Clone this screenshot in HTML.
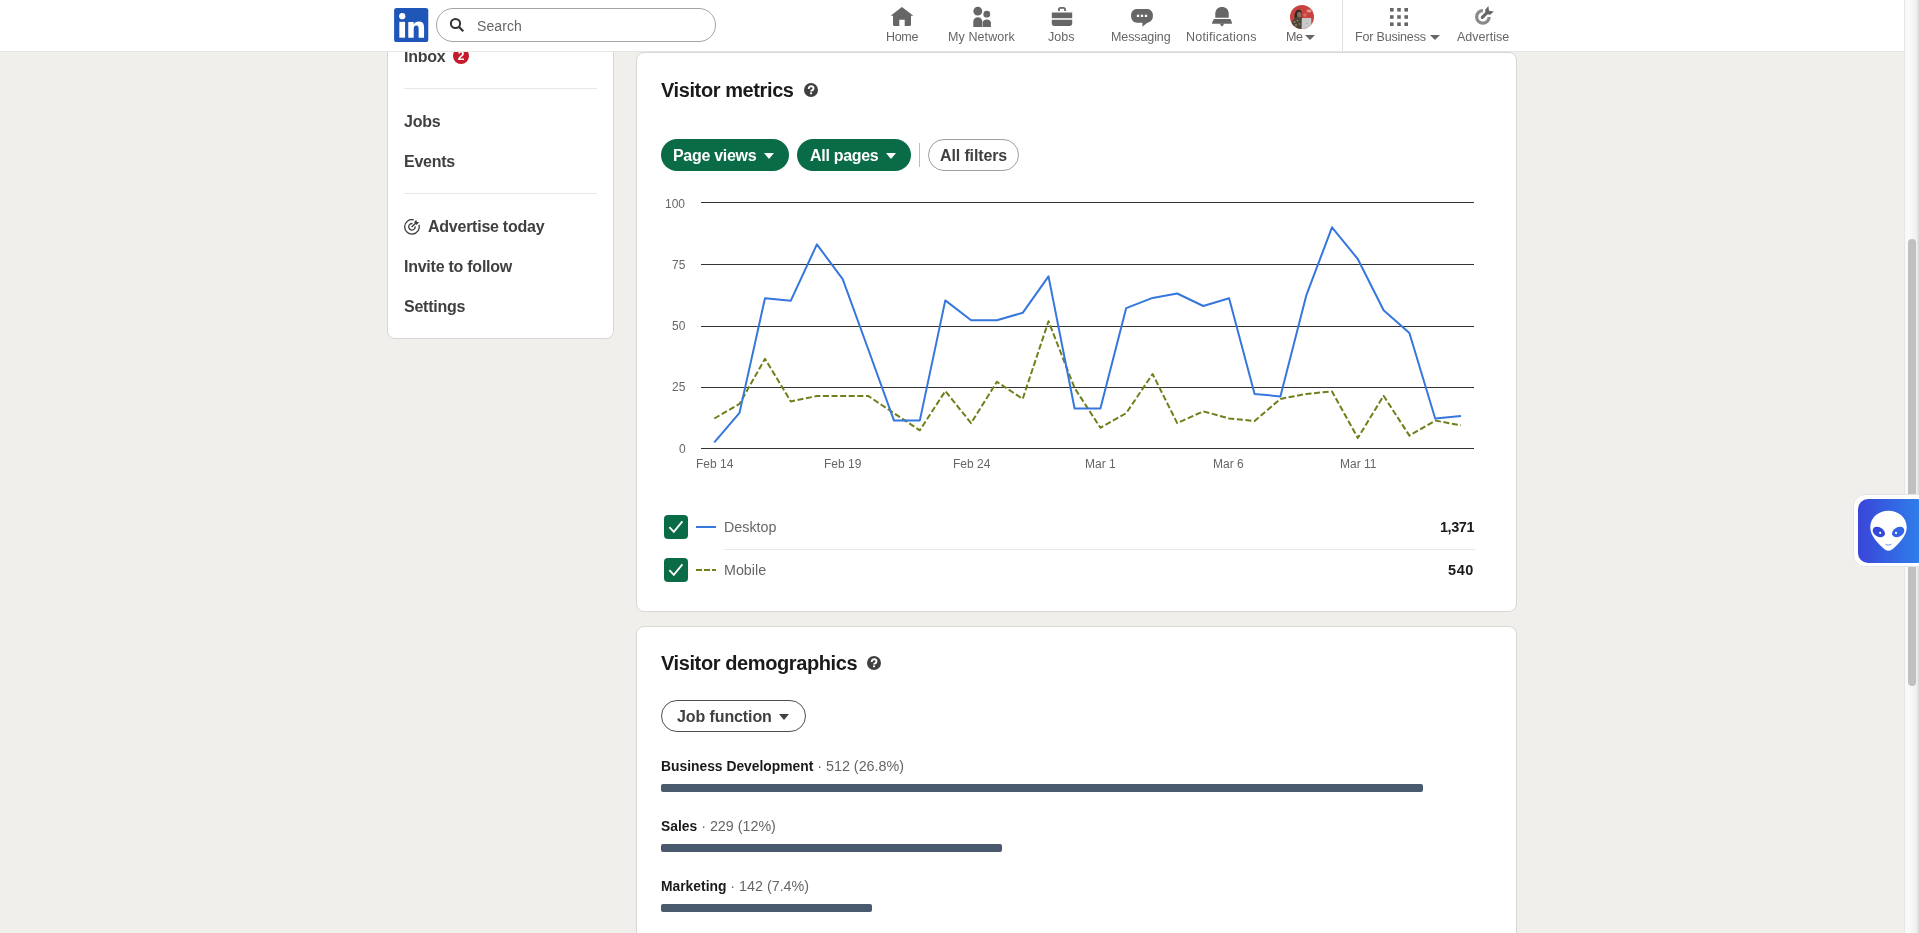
<!DOCTYPE html>
<html>
<head>
<meta charset="utf-8">
<style>
html,body{margin:0;padding:0;}
body{width:1919px;height:933px;overflow:hidden;position:relative;background:#f0efeb;font-family:"Liberation Sans",sans-serif;}
.abs{position:absolute;}
.t{position:absolute;line-height:1;white-space:nowrap;will-change:transform;}
.card{position:absolute;background:#fff;border:1px solid #d8d7d3;border-radius:8px;box-sizing:border-box;}
.side{font-weight:bold;font-size:16px;letter-spacing:-0.25px;color:#404040;}
.hr{position:absolute;height:1px;background:#e8e8e8;}
.nav{position:absolute;left:0;top:0;width:1904px;height:52px;background:#fff;border-bottom:1px solid #e6e6e6;box-sizing:border-box;}
.nl{font-size:12.5px;color:#666;}
.ax{font-size:12px;color:#666;}
.btn{position:absolute;box-sizing:border-box;border-radius:16px;height:32px;}
.bt{font-weight:bold;font-size:16px;letter-spacing:-0.3px;}
</style>
</head>
<body>

<!-- left sidebar card -->
<div class="card" style="left:387px;top:-20px;width:227px;height:359px;"></div>
<div class="t side" style="left:404px;top:49px;">Inbox</div>
<div class="abs" style="left:453px;top:48px;width:16px;height:16px;border-radius:50%;background:#c41a2b;color:#fff;font-size:12px;font-weight:bold;line-height:16px;text-align:center;will-change:transform;">2</div>
<div class="hr" style="left:404px;top:88px;width:193px;"></div>
<div class="t side" style="left:404px;top:114px;">Jobs</div>
<div class="t side" style="left:404px;top:154px;">Events</div>
<div class="hr" style="left:404px;top:193px;width:193px;"></div>
<svg class="abs" style="left:404px;top:219px;" width="17" height="17" viewBox="0 0 17 17">
  <path d="M9.70 0.77A7.25 7.25 0 1 0 14.92 5.80" fill="none" stroke="#404040" stroke-width="1.35"/>
  <path d="M8.51 4.60A3.25 3.25 0 1 0 11.17 7.35" fill="none" stroke="#404040" stroke-width="1.35"/>
  <path d="M7.6 8.1L11.6 4.3" stroke="#404040" stroke-width="1.4"/>
  <path d="M12.1 .8L13 3l2.3.3-2.9 2.6-2.3-2.3z" fill="#404040"/>
</svg>
<div class="t side" style="left:428px;top:219px;">Advertise today</div>
<div class="t side" style="left:404px;top:258.5px;">Invite to follow</div>
<div class="t side" style="left:404px;top:298.8px;">Settings</div>

<!-- main card: visitor metrics -->
<div class="card" style="left:636px;top:52px;width:881px;height:560px;"></div>
<div class="t" style="left:661px;top:80px;font-size:20px;letter-spacing:-0.4px;font-weight:bold;color:#1a1a1a;">Visitor metrics</div>
<svg class="abs" style="left:804px;top:83px;" width="14" height="14" viewBox="0 0 14 14">
  <circle cx="7" cy="7" r="7" fill="#404040"/>
  <path d="M4.7 5.9C4.7 4.2 5.7 3.3 7.1 3.3s2.4.9 2.4 2.1c0 1.1-.7 1.6-1.5 2-.6.3-.9.6-.9 1.2" fill="none" stroke="#fff" stroke-width="1.9"/>
  <rect x="6.05" y="9.4" width="2" height="1.8" fill="#fff"/>
</svg>

<div class="btn" style="left:661px;top:139px;width:128px;background:#0a6b47;"></div>
<div class="t bt" style="left:673px;top:147.5px;color:#fff;">Page views</div>
<svg class="abs" style="left:764px;top:153px;" width="10" height="6" viewBox="0 0 10 6"><path d="M0 0h10L5 6z" fill="#fff"/></svg>
<div class="btn" style="left:797px;top:139px;width:114px;background:#0a6b47;"></div>
<div class="t bt" style="left:810px;top:147.5px;color:#fff;">All pages</div>
<svg class="abs" style="left:886px;top:153px;" width="10" height="6" viewBox="0 0 10 6"><path d="M0 0h10L5 6z" fill="#fff"/></svg>
<div class="abs" style="left:919px;top:143px;width:1px;height:24px;background:#bdbdbd;"></div>
<div class="btn" style="left:928px;top:139px;width:91px;border:1px solid #a0a0a0;background:#fff;"></div>
<div class="t bt" style="left:940px;top:147.5px;letter-spacing:-0.12px;color:#404040;">All filters</div>

<!-- chart -->
<svg class="abs" style="left:0;top:0;" width="1919" height="933">
  <g fill="#333">
    <rect x="701" y="202" width="773" height="1"/>
    <rect x="701" y="264" width="773" height="1"/>
    <rect x="701" y="326" width="773" height="1"/>
    <rect x="701" y="387" width="773" height="1"/>
    <rect x="701" y="448" width="773" height="1"/>
  </g>
  <polyline fill="none" stroke="#6f7f1a" stroke-width="2" stroke-dasharray="6 2.6" stroke-linejoin="round"
   points="714.3,418.5 739.5,403.9 765,358.8 790.8,401.4 816.9,396.1 842.7,396.1 868.5,396.1 894,413.2 919.8,430.3 945.3,391.1 971.1,423.1 996.9,381.8 1022.7,398.9 1048.5,321.2 1074.6,388 1100.4,427.8 1126.2,413.2 1152.6,374 1177.2,423.1 1203.3,411.3 1229.1,418.5 1254.6,421 1280.4,398.9 1306.2,393.9 1332,391.4 1357.8,438 1383.6,395.8 1409.4,435.6 1435.2,420.6 1461,425.3"/>
  <polyline fill="none" stroke="#3577dd" stroke-width="2" stroke-linejoin="round"
   points="714.3,442.4 739.5,412.9 765,298.2 790.8,300.7 816.9,244.4 842.7,279.2 868.5,350 894,420.6 919.8,420.6 945.3,300.4 971.1,320.2 996.9,320.2 1022.7,312.8 1048.5,276.4 1074.6,408.5 1100.4,408.5 1126.2,308.1 1152.6,297.9 1177.2,293.5 1203.3,306 1229.1,298.2 1254.6,393.9 1280.4,396.4 1306.2,295.7 1332,227.3 1357.8,259 1383.6,310.3 1409.4,333 1435.2,418.5 1461,416"/>
</svg>
<div class="t ax" style="left:665px;top:198px;">100</div>
<div class="t ax" style="left:672px;top:259px;">75</div>
<div class="t ax" style="left:672px;top:320px;">50</div>
<div class="t ax" style="left:672px;top:381px;">25</div>
<div class="t ax" style="left:679px;top:443px;">0</div>
<div class="t ax" style="left:696px;top:458px;">Feb 14</div>
<div class="t ax" style="left:824px;top:458px;">Feb 19</div>
<div class="t ax" style="left:953px;top:458px;">Feb 24</div>
<div class="t ax" style="left:1085px;top:458px;">Mar 1</div>
<div class="t ax" style="left:1213px;top:458px;">Mar 6</div>
<div class="t ax" style="left:1340px;top:458px;">Mar 11</div>

<!-- legend -->
<svg class="abs" style="left:664px;top:515px;" width="24" height="24" viewBox="0 0 24 24"><rect width="24" height="24" rx="4" fill="#0a6b47"/><path d="M5.4 12.2l4.4 4.6 8.6-10.4" fill="none" stroke="#fff" stroke-width="1.8"/></svg>
<div class="abs" style="left:696px;top:526px;width:20px;height:2px;background:#3a78e0;"></div>
<div class="t" style="left:724px;top:520px;font-size:14.3px;color:#666;">Desktop</div>
<div class="t" style="right:445px;top:519.6px;font-size:14.5px;letter-spacing:-0.45px;font-weight:bold;color:#1a1a1a;">1,371</div>
<div class="hr" style="left:724px;top:549px;width:751px;"></div>
<svg class="abs" style="left:664px;top:558px;" width="24" height="24" viewBox="0 0 24 24"><rect width="24" height="24" rx="4" fill="#0a6b47"/><path d="M5.4 12.2l4.4 4.6 8.6-10.4" fill="none" stroke="#fff" stroke-width="1.8"/></svg>
<svg class="abs" style="left:696px;top:569px;" width="20" height="3"><g fill="#6f7f1a"><rect x="0" y="0" width="6" height="2"/><rect x="8" y="0" width="6" height="2"/><rect x="16" y="0" width="4" height="2"/></g></svg>
<div class="t" style="left:724px;top:563px;font-size:14.3px;color:#666;">Mobile</div>
<div class="t" style="right:444.6px;top:563.2px;font-size:14.5px;letter-spacing:0.6px;font-weight:bold;color:#1a1a1a;">540</div>

<!-- demographics card -->
<div class="card" style="left:636px;top:626px;width:881px;height:400px;"></div>
<div class="t" style="left:661px;top:653.3px;font-size:20px;letter-spacing:-0.4px;font-weight:bold;color:#1a1a1a;">Visitor demographics</div>
<svg class="abs" style="left:867px;top:656px;" width="14" height="14" viewBox="0 0 14 14">
  <circle cx="7" cy="7" r="7" fill="#404040"/>
  <path d="M4.7 5.9C4.7 4.2 5.7 3.3 7.1 3.3s2.4.9 2.4 2.1c0 1.1-.7 1.6-1.5 2-.6.3-.9.6-.9 1.2" fill="none" stroke="#fff" stroke-width="1.9"/>
  <rect x="6.05" y="9.4" width="2" height="1.8" fill="#fff"/>
</svg>
<div class="btn" style="left:661px;top:700px;width:145px;border:1px solid #505050;background:#fff;"></div>
<div class="t bt" style="left:677px;top:709px;letter-spacing:-0.1px;color:#404040;">Job function</div>
<svg class="abs" style="left:779px;top:713.7px;" width="10" height="6" viewBox="0 0 10 6"><path d="M0 0h10L5 6z" fill="#404040"/></svg>

<div class="t" style="left:661px;top:759px;font-size:14.3px;color:#666;"><b style="color:#1a1a1a;font-size:13.85px;">Business Development</b> · 512 (26.8%)</div>
<div class="abs" style="left:661px;top:784px;width:762px;height:8px;border-radius:2px;background:#4a5a6e;"></div>
<div class="t" style="left:661px;top:819px;font-size:14.3px;color:#666;"><b style="color:#1a1a1a;font-size:13.85px;">Sales</b> · 229 (12%)</div>
<div class="abs" style="left:661px;top:844px;width:341px;height:8px;border-radius:2px;background:#4a5a6e;"></div>
<div class="t" style="left:661px;top:879px;font-size:14.3px;color:#666;"><b style="color:#1a1a1a;font-size:13.85px;">Marketing</b> · 142 (7.4%)</div>
<div class="abs" style="left:661px;top:904px;width:211px;height:8px;border-radius:2px;background:#4a5a6e;"></div>

<!-- nav -->
<div class="nav"></div>
<svg class="abs" style="left:394.2px;top:8.2px;" width="34.4" height="34.2" viewBox="0 0 34 34">
  <rect width="34" height="34" rx="2.5" fill="#1f57b8"/>
  <circle cx="8.1" cy="8.1" r="3.1" fill="#fff"/>
  <rect x="5.2" y="13.8" width="5.7" height="15.7" fill="#fff"/>
  <path d="M14.1 13.8h5.4v2.3c.8-1.5 2.6-2.7 5.2-2.7 4.3 0 5.1 2.8 5.1 6.5v9.6h-5.4v-8.5c0-2-.1-3.6-2.3-3.6-2.2 0-2.6 1.6-2.6 3.5v8.6h-5.4z" fill="#fff"/>
</svg>
<div class="abs" style="left:436px;top:8px;width:280px;height:34px;border:1px solid #a3a3a3;border-radius:17px;box-sizing:border-box;background:#fff;"></div>
<svg class="abs" style="left:448px;top:16px;" width="18" height="18" viewBox="0 0 18 18">
  <circle cx="7.5" cy="7.5" r="4.6" fill="none" stroke="#333" stroke-width="2"/>
  <path d="M10.8 10.8l4.5 4.5" stroke="#333" stroke-width="2.2"/>
</svg>
<div class="t" style="left:477px;top:19px;font-size:14px;letter-spacing:0.1px;color:#666;">Search</div>

<!-- nav items -->
<svg class="abs" style="left:890px;top:5px;" width="24" height="24" viewBox="0 0 24 24"><path d="M11.9 2.1L0.9 10.4v0.3h2.1v9c0 .7.5 1.2 1.2 1.2h5.1v-6.1h5.4v6.1h5.1c.7 0 1.2-.5 1.2-1.2v-9h2.1v-0.3z" fill="#666"/></svg>
<div class="t nl" style="left:886px;top:31px;letter-spacing:-0.33px;">Home</div>

<svg class="abs" style="left:970px;top:5px;" width="24" height="24" viewBox="0 0 24 24"><g fill="#666"><circle cx="7.8" cy="6.2" r="4.4"/><circle cx="16.8" cy="9.2" r="3.4"/><path d="M3.3 22V16.5c0-2.3 1.8-4.3 4.5-4.3s4.5 2 4.5 4.3V22z"/><path d="M12.7 22v-4.2c0-1.8 1.6-3.3 4.1-3.3s4.1 1.5 4.1 3.3V22z"/></g></svg>
<div class="t nl" style="left:948px;top:31px;letter-spacing:0.09px;">My Network</div>

<svg class="abs" style="left:1050px;top:5px;" width="24" height="24" viewBox="0 0 24 24"><g fill="#666"><path d="M8 6V4.5C8 3.1 9.1 2 10.5 2h3C14.9 2 16 3.1 16 4.5V6h-1.8V4.6c0-.5-.3-.8-.8-.8h-2.8c-.5 0-.8.3-.8.8V6z"/><path d="M1.8 7.5h20.4v5.7H1.8z"/><path d="M1.8 14.8h20.4v3.7c0 1.4-1.1 2.4-2.4 2.4H4.2c-1.4 0-2.4-1-2.4-2.4z"/></g></svg>
<div class="t nl" style="left:1048px;top:31px;letter-spacing:0.07px;">Jobs</div>

<svg class="abs" style="left:1130px;top:5px;" width="24" height="24" viewBox="0 0 24 24"><path d="M7.2 4.1h9.6c3.6 0 6.1 2.7 6.1 6.2v.9c0 3.3-2.4 6-5.6 6.5L12.4 21.8V17.7H7.2c-3.6 0-6.1-2.9-6.1-6.5v-.9c0-3.5 2.5-6.2 6.1-6.2z" fill="#666"/><g fill="#fff"><rect x="6.9" y="9.7" width="2.3" height="2.3"/><rect x="10.85" y="9.7" width="2.3" height="2.3"/><rect x="14.8" y="9.7" width="2.3" height="2.3"/></g></svg>
<div class="t nl" style="left:1111px;top:31px;letter-spacing:-0.1px;">Messaging</div>

<svg class="abs" style="left:1210px;top:5px;" width="24" height="24" viewBox="0 0 24 24"><g fill="#666"><path d="M5.3 12.7V8.5C5.3 4.7 8.1 2 12 2s6.7 2.7 6.7 6.5v4.2z"/><path d="M3.9 14.1h16.6l1.4 3.3v1.3H2.1V17.6z"/><path d="M10.2 18.5h3.6c0 1.2-.8 2.7-1.8 2.7s-1.8-1.5-1.8-2.7z"/></g></svg>
<div class="t nl" style="left:1186px;top:31px;letter-spacing:0.2px;">Notifications</div>

<svg class="abs" style="left:1290px;top:5px;" width="24" height="24" viewBox="0 0 24 24">
  <defs><clipPath id="av"><circle cx="12" cy="12" r="12"/></clipPath></defs>
  <g clip-path="url(#av)">
    <rect width="24" height="24" fill="#c8433f"/>
    <ellipse cx="19" cy="6" rx="2.6" ry="1.4" fill="#e8a9a5" opacity=".8"/>
    <circle cx="15" cy="10" r="1.7" fill="#dc8783" opacity=".6"/>
    <path d="M4.5 13c-.3-4 .8-8 4-8.3 2.2-.2 3.2 1.5 3.4 3.5l.3 5.5z" fill="#2f2924"/>
    <path d="M7 9c.5-2.5 3.5-3 4.4-.5.5 1.6.4 4-.3 5.2H7.5z" fill="#8b6d58"/>
    <path d="M1 24c.3-5 1.3-9.5 4.5-11.2 2.5-1.3 5.7-.8 7 1.5L13 24z" fill="#4d4638"/>
    <circle cx="4.5" cy="17" r=".9" fill="#9a8f70"/><circle cx="7.5" cy="15.5" r=".8" fill="#9a8f70"/><circle cx="6" cy="20" r=".9" fill="#9a8f70"/><circle cx="9.5" cy="19" r=".8" fill="#9a8f70"/><circle cx="3.5" cy="21.5" r=".7" fill="#9a8f70"/>
    <path d="M11.6 24l.2-10.3c0-.4.3-.6.7-.6h8.2c.4 0 .6.2.6.6V24z" fill="#c9c9c9"/>
    <circle cx="17" cy="18.5" r=".5" fill="#888"/>
  </g>
</svg>
<div class="t nl" style="left:1286px;top:31px;letter-spacing:-0.5px;">Me</div>
<svg class="abs" style="left:1305px;top:35px;" width="10" height="5" viewBox="0 0 10 5"><path d="M0 0h10L5 5z" fill="#666"/></svg>

<div class="abs" style="left:1342px;top:0;width:1px;height:51px;background:#e0e0e0;"></div>

<svg class="abs" style="left:1387px;top:5px;" width="24" height="24" viewBox="0 0 24 24"><g fill="#666">
 <rect x="3" y="3" width="3.6" height="3.6"/><rect x="10.2" y="3" width="3.6" height="3.6"/><rect x="17.4" y="3" width="3.6" height="3.6"/>
 <rect x="3" y="10.2" width="3.6" height="3.6"/><rect x="10.2" y="10.2" width="3.6" height="3.6"/><rect x="17.4" y="10.2" width="3.6" height="3.6"/>
 <rect x="3" y="17.4" width="3.6" height="3.6"/><rect x="10.2" y="17.4" width="3.6" height="3.6"/><rect x="17.4" y="17.4" width="3.6" height="3.6"/>
</g></svg>
<div class="t nl" style="left:1355px;top:31px;letter-spacing:-0.18px;">For Business</div>
<svg class="abs" style="left:1430px;top:35px;" width="10" height="5" viewBox="0 0 10 5"><path d="M0 0h10L5 5z" fill="#666"/></svg>

<svg class="abs" style="left:1471px;top:5px;" width="24" height="24" viewBox="0 0 24 24">
 <path d="M18.15 11.90A6.25 6.25 0 1 1 11.90 5.65" fill="none" stroke="#8a8a8a" stroke-width="3.2"/>
 <path d="M11.3 12.4L16.6 7.2" stroke="#666" stroke-width="3.1" stroke-linecap="round"/>
 <path d="M17.4 1l.6 4.7 4.8.7-3.6 3.3-4.4-.6-.7-4.2z" fill="#666"/>
</svg>
<div class="t nl" style="left:1457px;top:31px;letter-spacing:0px;">Advertise</div>

<!-- scrollbar -->
<div class="abs" style="left:1904px;top:0;width:15px;height:933px;background:linear-gradient(90deg,#e6e6e6 0,#e6e6e6 1px,#f9f9f9 1px,#f9f9f9 6px,#eeeeee 13px,#dcdcdc 14px,#dcdcdc 15px);"></div>
<div class="abs" style="left:1908px;top:239px;width:8px;height:447px;border-radius:4px;background:#c0c0c0;"></div>

<!-- alien widget -->
<div class="abs" style="left:1853px;top:494px;width:80px;height:73px;border-radius:12px;background:#fff;border:1px solid #e4e4e4;box-sizing:border-box;"></div>
<div class="abs" style="left:1858px;top:499px;width:70px;height:64px;border-radius:10px;background:linear-gradient(90deg,#3a45d8,#2d86ee);"></div>
<svg class="abs" style="left:1869px;top:510px;" width="40" height="42" viewBox="0 0 40 42">
  <path d="M19.5 .8C9.5 .8 1.3 7.5 1.3 17.5C1.3 25 7.5 31.5 13 37C15.2 39.3 17.3 40.8 19.5 40.8S23.8 39.3 26 37C31.5 31.5 37.7 25 37.7 17.5C37.7 7.5 29.5 .8 19.5 .8z" fill="#fff"/>
  <ellipse cx="9.8" cy="22" rx="6.6" ry="4.6" transform="rotate(30 9.8 22)" fill="#3548dc"/>
  <ellipse cx="29.2" cy="22" rx="6.6" ry="4.6" transform="rotate(-30 29.2 22)" fill="#3063e6"/>
  <circle cx="11.2" cy="22.9" r="1.1" fill="#fff"/>
  <circle cx="27" cy="22.9" r="1.1" fill="#fff"/>
  <path d="M16.5 34.2c1.7 1.2 4.2 1.2 5.8 0" fill="none" stroke="#3b5ee0" stroke-width=".7"/>
</svg>

</body>
</html>
